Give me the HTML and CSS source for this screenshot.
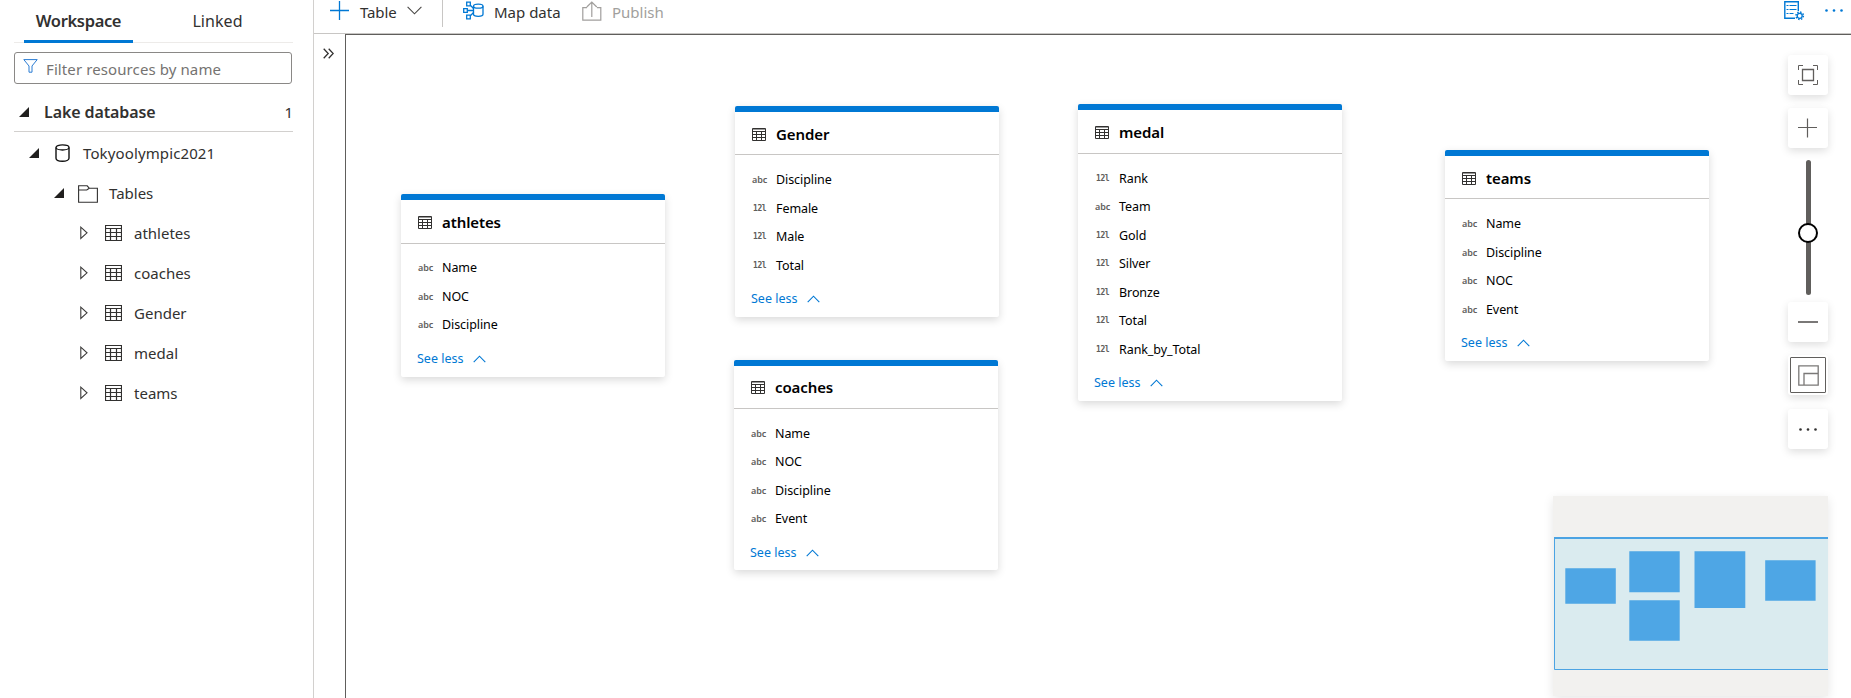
FILE: index.html
```html
<!DOCTYPE html>
<html lang="en">
<head>
<meta charset="utf-8">
<title>Lake database designer</title>
<link rel="stylesheet" href="styles.css">
</head>
<body>
<svg class="defs" width="0" height="0">
  <symbol id="table" viewBox="0 0 17 16"><path d="M.5 .5h16v15H.5zM.5 3.5h16M.5 7.5h16M.5 11.5h16M5.5 3.5v12M11.5 3.5v12" fill="none" stroke="currentColor" stroke-width="1.2"/></symbol>
  <symbol id="table-sm" viewBox="0 0 14 13"><path d="M.5 .5h13v12H.5zM.5 3.5h13M.5 6.5h13M.5 9.5h13M4.5 3v10M9.5 3v10" fill="none" stroke="currentColor"/><path d="M1 1.5h12" stroke="#999"/></symbol>
  <symbol id="open" viewBox="0 0 10 10"><path d="M10 0v10H0z" fill="#201f1e"/></symbol>
  <symbol id="closed" viewBox="0 0 8 14"><path d="M.8 1.2v11.2L7 6.8z" fill="none" stroke="#3b3a39" stroke-width="1.1"/></symbol>
  <symbol id="up" viewBox="0 0 13 8"><path d="M.7 7.2L6.5 1.2l5.8 6" fill="none" stroke="currentColor" stroke-width="1.1"/></symbol>
</svg>
<div class="app">
  <aside class="sidebar">
    <nav class="tabs"><span class="tab active">Workspace</span><span class="tab linked">Linked</span></nav>
    <div class="filter">
      <svg width="15" height="14" viewBox="0 0 15 14"><path d="M.8 .6h13.4L9 7v6.2H6V7z" fill="none" stroke="#2b7cd3"/></svg>
      <span>Filter resources by name</span>
    </div>
    <div class="section"><svg width="10" height="10"><use href="#open"/></svg><b>Lake database</b><span class="count">1</span></div>
    <ul class="tree">
      <li class="l1"><svg class="arrow" width="10" height="10"><use href="#open"/></svg>
        <svg class="db" width="15" height="18" viewBox="0 0 15 18"><path d="M1 3.4v10.8c0 1.7 2.9 3 6.5 3s6.500-1.300 6.500-3V3.400" fill="none" stroke="#111" stroke-width="1.4"/><ellipse cx="7.500" cy="3.400" rx="6.500" ry="2.600" fill="none" stroke="#111" stroke-width="1.300"/></svg><span>Tokyoolympic2021</span></li>
      <li class="l2"><svg class="arrow" width="10" height="10"><use href="#open"/></svg>
        <svg class="folder" width="20" height="18" viewBox="0 0 20 18"><path d="M.6 17.200V.8h8.600l2 2.400h8.200v14z M.6 5h8.200l2.400-1.800" fill="none" stroke="#323130" stroke-width="1.100"/></svg><span>Tables</span></li>
      <li class="l3"><svg class="tri" width="8" height="14"><use href="#closed"/></svg><svg class="tbl" width="17" height="16"><use href="#table"/></svg><span>athletes</span></li>
      <li class="l3"><svg class="tri" width="8" height="14"><use href="#closed"/></svg><svg class="tbl" width="17" height="16"><use href="#table"/></svg><span>coaches</span></li>
      <li class="l3"><svg class="tri" width="8" height="14"><use href="#closed"/></svg><svg class="tbl" width="17" height="16"><use href="#table"/></svg><span>Gender</span></li>
      <li class="l3"><svg class="tri" width="8" height="14"><use href="#closed"/></svg><svg class="tbl" width="17" height="16"><use href="#table"/></svg><span>medal</span></li>
      <li class="l3"><svg class="tri" width="8" height="14"><use href="#closed"/></svg><svg class="tbl" width="17" height="16"><use href="#table"/></svg><span>teams</span></li>
    </ul>
  </aside>
  <main class="main">
    <header class="toolbar">
      <svg class="add" width="19" height="20" viewBox="0 0 19 20"><path d="M9.500 1v19M0 10.500h19" stroke="#0078d4" stroke-width="1.300"/></svg>
      <span class="t-table">Table</span>
      <svg class="down" width="15" height="9" viewBox="0 0 15 9"><path d="M.6 .8l6.900 7 6.900-7" fill="none" stroke="#484644" stroke-width="1.100"/></svg>
      <i class="divider"></i>
      <svg class="map" width="21" height="19" viewBox="0 0 21 19" fill="none" stroke="#0078d4" stroke-width="1.300"><path d="M3.700 1.200h3.600v3.600H3.700zM.7 7.700h3.600v3.600H.7zM3.700 14.200h3.600v3.600H3.700zM4.300 9.500h6.200M7.300 4.200l3.500 3.500M7.300 14.800l3.500-3.500"/><path d="M10.500 5.300v8c0 1.200 2.100 2 4.800 2s4.700-.8 4.700-2v-8"/><ellipse cx="15.250" cy="5.200" rx="4.750" ry="2"/></svg>
      <span class="t-map">Map data</span>
      <svg class="pub" width="20" height="20" viewBox="0 0 20 20" fill="none" stroke="#a19f9d" stroke-width="1.200"><path d="M5 6.700H.8v12.500h18V6.700H15M9.800 16V1M4.800 6l5-5 5 5"/></svg>
      <span class="t-pub">Publish</span>
      <svg class="props" width="21" height="21" viewBox="0 0 21 21" fill="none" stroke="#0078d4"><path d="M11 18.300H.8V1.800h13.500V11" stroke-width="1.400"/><path d="M2.500 5.500h2M5.500 5.500h7M2.500 9.500h2M5.500 9.500h7M2.500 13.500h2M5.500 13.500h4" stroke-width="1.200"/><circle cx="15.700" cy="15.800" r="2.500" stroke-width="1.300"/><circle cx="15.700" cy="15.800" r="3.700" stroke-width="1.500" stroke-dasharray="1.450 1.450"/></svg>
      <svg class="more" width="18" height="3" fill="#0078d4"><circle cx="1.500" cy="1.500" r="1.300"/><circle cx="9" cy="1.500" r="1.300"/><circle cx="16.500" cy="1.500" r="1.300"/></svg>
    </header>
    <div class="work">
      <div class="rail"><svg width="11" height="11" viewBox="0 0 11 11"><path d="M.7 .8l4.500 4.700L.7 10.200M5.700 .8l4.500 4.700-4.500 4.700" fill="none" stroke="#323130" stroke-width="1.300"/></svg></div>
      <section class="canvas">
        <article class="card athletes"><h2><svg width="14" height="13"><use href="#table-sm"/></svg><span>athletes</span></h2>
          <ul><li><i>abc</i>Name</li><li><i>abc</i>NOC</li><li><i>abc</i>Discipline</li></ul><a>See less<svg width="13" height="8"><use href="#up"/></svg></a></article>
        <article class="card gender"><h2><svg width="14" height="13"><use href="#table-sm"/></svg><span>Gender</span></h2>
          <ul><li><i>abc</i>Discipline</li><li><i class="num">12l</i>Female</li><li><i class="num">12l</i>Male</li><li><i class="num">12l</i>Total</li></ul><a>See less<svg width="13" height="8"><use href="#up"/></svg></a></article>
        <article class="card coaches"><h2><svg width="14" height="13"><use href="#table-sm"/></svg><span>coaches</span></h2>
          <ul><li><i>abc</i>Name</li><li><i>abc</i>NOC</li><li><i>abc</i>Discipline</li><li><i>abc</i>Event</li></ul><a>See less<svg width="13" height="8"><use href="#up"/></svg></a></article>
        <article class="card medal"><h2><svg width="14" height="13"><use href="#table-sm"/></svg><span>medal</span></h2>
          <ul><li><i class="num">12l</i>Rank</li><li><i>abc</i>Team</li><li><i class="num">12l</i>Gold</li><li><i class="num">12l</i>Silver</li><li><i class="num">12l</i>Bronze</li><li><i class="num">12l</i>Total</li><li><i class="num">12l</i>Rank_by_Total</li></ul><a>See less<svg width="13" height="8"><use href="#up"/></svg></a></article>
        <article class="card teams"><h2><svg width="14" height="13"><use href="#table-sm"/></svg><span>teams</span></h2>
          <ul><li><i>abc</i>Name</li><li><i>abc</i>Discipline</li><li><i>abc</i>NOC</li><li><i>abc</i>Event</li></ul><a>See less<svg width="13" height="8"><use href="#up"/></svg></a></article>

        <div class="controls">
          <span class="btn"><svg width="20" height="20" viewBox="0 0 20 20" fill="none" stroke="#605e5c"><path d="M4.500 4.500h11v11h-11z" stroke-width="1.300"/><path d="M.5 5V.5H5M15 .5h4.500V5M19.500 15v4.500H15M5 19.500H.5V15"/></svg></span>
          <span class="btn plus"><svg width="20" height="20" viewBox="0 0 20 20"><path d="M9.500 .5v19M0 9.500h19" stroke="#605e5c" stroke-width="1.200"/></svg></span>
          <span class="slider"><i class="knob"></i></span>
          <span class="btn"><svg width="20" height="20" viewBox="0 0 20 20"><path d="M0 10h20" stroke="#7a7877" stroke-width="2"/></svg></span>
          <span class="btn toggled"><svg width="21" height="21" viewBox="0 0 21 21" fill="none" stroke="#7a7877" stroke-width="1.300"><path d="M.8 .8h19.400v19.400H.8zM20 8.500H6V20"/></svg></span>
          <span class="btn dots"><svg width="18" height="3" fill="#323130"><circle cx="1.500" cy="1.500" r="1.300"/><circle cx="9" cy="1.500" r="1.300"/><circle cx="16.500" cy="1.500" r="1.300"/></svg></span>
        </div>
        <div class="minimap"><svg width="275" height="200" viewBox="0 0 275 200"><path d="M1 41h274v133H1z" fill="#daebef"/><path d="M275 173.500H1.500V41" fill="none" stroke="#4ba3e3"/><path d="M1 42h274" stroke="#4ba3e3" stroke-width="2"/><g fill="#4ea6e5"><path d="M12.300 72.300h50.500v35.400H12.300zM76.300 55.300h50.400v41H76.300zM76.300 104.200h50.400v40.600H76.300zM141.500 55.200h50.800v56.900h-50.800zM212.200 64.200h50.400v40.500h-50.400z"/></g></svg></div>
      </section>
    </div>
  </main>
</div>
</body>
</html>
```
FILE: styles.css
```css
* { box-sizing: border-box; }
body { margin: 0; background: #fff; color: #323130; font: 15px/20px "Noto Sans", sans-serif; overflow: hidden; }
svg { display: block; flex: none; }
ul { list-style: none; margin: 0; padding: 0; }
.defs { position: absolute; }
.app { display: flex; height: 698px; }

.sidebar { width: 314px; flex: none; border-right: 1px solid #d2d0ce; padding: 0 20px 0 14px; }
.tabs { display: flex; height: 43px; padding-left: 10px; border-bottom: 1px solid #edebe9; font-size: 16px; }
.tab { flex: none; height: 43px; padding: 11px 0 0; text-align: center; }
.active { width: 109px; border-bottom: 3px solid #0078d4; font-weight: 600; font-size: 16.5px; letter-spacing: -.35px; }
.linked { width: 169px; letter-spacing: .05px; }
.filter { display: flex; margin-top: 9px; width: 278px; height: 32px; border: 1px solid #8a8886; border-radius: 3px; padding: 6px 0 0 8px; gap: 8px; color: #757371; }
.filter span { letter-spacing: .1px; }
.section { display: flex; align-items: center; height: 48px; padding: 9px 0 0 5px; gap: 15px; border-bottom: 1px solid #d2d0ce; font-size: 16px; }
.section b { font-weight: 600; letter-spacing: -.1px; }
.count { margin-left: auto; font-size: 15px; }
.tree { padding-top: 2px; }
.tree li { display: flex; align-items: center; height: 40px; }
.tree span { padding-bottom: 2px; }
.tree svg { margin-top: 0; }
.l1 { padding-left: 15px; }
.l1 span { letter-spacing: .12px; }
.l2 { padding-left: 40px; }
.l3 { padding-left: 66px; }
.tree .db { margin: -2px 13px 0 16px; }
.tree .folder { margin: -1px 11px 0 14px; }
.tree .tbl { margin: -2px 12px 0 17px; }
.tree .tri { margin-top: -2px; }
.tree .arrow { margin-top: -2px; }

.main { flex: 1; min-width: 0; display: flex; flex-direction: column; }
.toolbar { display: flex; align-items: flex-start; height: 34px; border-bottom: 1px solid #c8c6c4; padding-left: 16px; }
.toolbar span { padding-top: 2px; }
.t-table { width: 36px; margin-left: 11px; letter-spacing: -.1px; }
.down { margin: 6px 0 0 11px; }
.divider { width: 1px; height: 27px; background: #c8c6c4; margin-left: 20px; }
.map { margin: 1px 0 0 20px; }
.t-map { width: 68px; margin-left: 10px; white-space: nowrap; }
.pub { margin: 1px 0 0 20px; }
.t-pub { margin-left: 10px; color: #a19f9d; }
.props { margin: 0 0 0 auto; }
.more { margin: 9px 8px 0 20px; }
.work { flex: 1; display: flex; }
.rail { width: 31px; padding: 14px 0 0 9px; }
.canvas { flex: 1; position: relative; border: solid #605e5c; border-width: 1px 0 0 1px; overflow: hidden; }

.card { position: absolute; width: 264px; background: #fff; border-top: 6px solid #0078d4; border-radius: 2px; box-shadow: 0 3px 8px rgba(0,0,0,.15); color: #000; font-size: 12.500px; padding-bottom: 3px; }
.card h2 { display: flex; align-items: center; gap: 10px; height: 43.400px; margin: 0; padding: 2px 17px 0; border-bottom: 1px solid #c8c6c4; font-size: 15px; font-weight: 600; letter-spacing: -.1px; }
.card h2 span { padding-bottom: 1px; }
.card h2 svg { color: #323130; }
.card ul { padding-top: 10.500px; }
.card li { display: flex; align-items: center; height: 28.500px; padding-left: 17px; letter-spacing: -.08px; }
.card i { width: 24px; font: 600 9px/12px "Noto Sans", sans-serif; color: #605e5c; }
.card i.num { padding-left: 1px; font: bold 8px/12px "DejaVu Sans Mono", monospace; letter-spacing: -.4px; }
.card a { display: flex; align-items: center; gap: 10px; height: 29px; padding-left: 16px; margin-top: 5px; color: #0078d4; }
.athletes { left: 55px; top: 159.300px; }
.gender { left: 389px; top: 71px; }
.coaches { left: 388px; top: 324.500px; }
.medal { left: 732px; top: 69.400px; }
.teams { left: 1099px; top: 115px; }

.controls { position: absolute; left: 1442px; top: 20px; display: flex; flex-direction: column; align-items: center; width: 40px; }
.btn { display: flex; align-items: center; justify-content: center; width: 40px; height: 40px; background: #fff; border-radius: 3px; box-shadow: 0 3px 8px rgba(0,0,0,.13); }
.plus { margin-top: 13px; }
.slider { width: 5px; height: 135px; margin: 12px 0 7px; border-radius: 3px; background: #605e5c; display: flex; justify-content: center; align-items: center; }
.knob { flex: none; width: 20px; height: 20px; border: 2px solid #000; border-radius: 50%; background: #fff; margin-top: 11px; }
.toggled { margin-top: 13px; outline: 1px solid #605e5c; outline-offset: -3px; }
.dots { margin-top: 14px; }
.minimap { position: absolute; left: 1207px; top: 461px; width: 275px; height: 200px; background: #f2f1ef; box-shadow: 0 3px 10px rgba(0,0,0,.1); }
```
